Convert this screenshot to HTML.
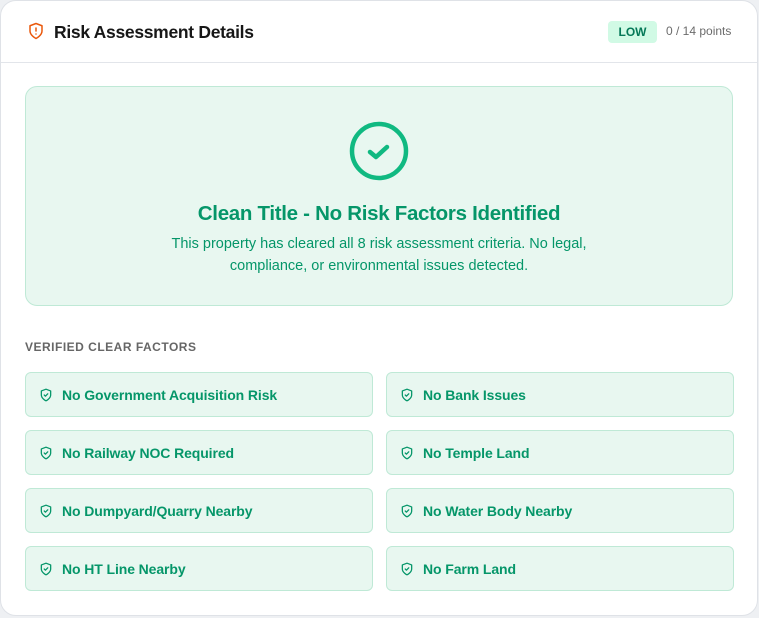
<!DOCTYPE html>
<html><head><style>
*{box-sizing:border-box;margin:0;padding:0}
body{width:759px;height:618px;background:#eef0f3;font-family:"Liberation Sans",sans-serif;overflow:hidden}
.card{position:absolute;left:0;top:0;width:758px;height:616px;background:#fff;border:1px solid #dfe2e7;border-radius:16px;}
.hdr{height:62px;border-bottom:1px solid #e2e5ea;position:relative}
.hdr h2{position:absolute;left:53px;top:21px;font-size:17.5px;font-weight:bold;color:#171717;letter-spacing:-0.3px}
.hdr svg{position:absolute;left:26px;top:21px}
.badge{position:absolute;left:607px;top:20px;width:49px;height:22px;background:#d1fae5;border-radius:4px;color:#047857;font-size:12px;font-weight:bold;text-align:center;line-height:22px}
.pts{position:absolute;left:665px;top:23px;font-size:12px;color:#6b6b6b}
.clean{position:absolute;left:25px;top:86px;width:708px;height:220px;background:#e8f7f0;border:1px solid #bfe9d6;border-radius:12px;text-align:center}
.clean svg{position:absolute;left:322px;top:34px}
.clean h3{position:absolute;left:0;right:0;top:115px;font-size:20.5px;font-weight:bold;color:#059669;letter-spacing:-0.3px}
.clean p{position:absolute;left:0;right:0;top:146px;font-size:14.5px;line-height:22px;color:#059669}
.lbl{position:absolute;left:25px;top:340px;font-size:12px;font-weight:bold;color:#666;letter-spacing:0.5px}
.item{position:absolute;width:348px;height:45px;background:#e8f7f0;border:1px solid #bfe9d6;border-radius:6px;color:#059669;font-size:14px;font-weight:bold;line-height:44px;padding-left:36px;letter-spacing:-0.1px}
.item svg{position:absolute;left:13px;top:15px}
</style></head><body>
<div class="card">
<div class="hdr">
<svg width="18" height="18" viewBox="0 0 24 24" fill="none" stroke="#ea580c" stroke-width="2" stroke-linecap="round" stroke-linejoin="round"><path d="M12 22s8-4 8-10V5l-8-3-8 3v7c0 6 8 10 8 10z"/><path d="M12 8v4M12 16h.01"/></svg>
<h2>Risk Assessment Details</h2>
<div class="badge">LOW</div><div class="pts">0 / 14 points</div>
</div>
</div>
<div class="clean">
<svg width="62" height="62" viewBox="0 0 62 62" fill="none" stroke="#10b981" stroke-width="4.5" stroke-linecap="round" stroke-linejoin="round"><circle cx="31" cy="30" r="27"/><path d="M22 31l6 5 11-10"/></svg>
<h3>Clean Title - No Risk Factors Identified</h3>
<p>This property has cleared all 8 risk assessment criteria. No legal,<br>compliance, or environmental issues detected.</p>
</div>
<div class="lbl">VERIFIED CLEAR FACTORS</div>
<div class="item" style="left:25px;top:372px"><svg width="14" height="14" viewBox="0 0 24 24" fill="none" stroke="#059669" stroke-width="2.2" stroke-linecap="round" stroke-linejoin="round"><path d="M12 22s8-4 8-10V5l-8-3-8 3v7c0 6 8 10 8 10z"/><path d="M9 12l2 2 4-4"/></svg>No Government Acquisition Risk</div>
<div class="item" style="left:386px;top:372px"><svg width="14" height="14" viewBox="0 0 24 24" fill="none" stroke="#059669" stroke-width="2.2" stroke-linecap="round" stroke-linejoin="round"><path d="M12 22s8-4 8-10V5l-8-3-8 3v7c0 6 8 10 8 10z"/><path d="M9 12l2 2 4-4"/></svg>No Bank Issues</div>
<div class="item" style="left:25px;top:430px"><svg width="14" height="14" viewBox="0 0 24 24" fill="none" stroke="#059669" stroke-width="2.2" stroke-linecap="round" stroke-linejoin="round"><path d="M12 22s8-4 8-10V5l-8-3-8 3v7c0 6 8 10 8 10z"/><path d="M9 12l2 2 4-4"/></svg>No Railway NOC Required</div>
<div class="item" style="left:386px;top:430px"><svg width="14" height="14" viewBox="0 0 24 24" fill="none" stroke="#059669" stroke-width="2.2" stroke-linecap="round" stroke-linejoin="round"><path d="M12 22s8-4 8-10V5l-8-3-8 3v7c0 6 8 10 8 10z"/><path d="M9 12l2 2 4-4"/></svg>No Temple Land</div>
<div class="item" style="left:25px;top:488px"><svg width="14" height="14" viewBox="0 0 24 24" fill="none" stroke="#059669" stroke-width="2.2" stroke-linecap="round" stroke-linejoin="round"><path d="M12 22s8-4 8-10V5l-8-3-8 3v7c0 6 8 10 8 10z"/><path d="M9 12l2 2 4-4"/></svg>No Dumpyard/Quarry Nearby</div>
<div class="item" style="left:386px;top:488px"><svg width="14" height="14" viewBox="0 0 24 24" fill="none" stroke="#059669" stroke-width="2.2" stroke-linecap="round" stroke-linejoin="round"><path d="M12 22s8-4 8-10V5l-8-3-8 3v7c0 6 8 10 8 10z"/><path d="M9 12l2 2 4-4"/></svg>No Water Body Nearby</div>
<div class="item" style="left:25px;top:546px"><svg width="14" height="14" viewBox="0 0 24 24" fill="none" stroke="#059669" stroke-width="2.2" stroke-linecap="round" stroke-linejoin="round"><path d="M12 22s8-4 8-10V5l-8-3-8 3v7c0 6 8 10 8 10z"/><path d="M9 12l2 2 4-4"/></svg>No HT Line Nearby</div>
<div class="item" style="left:386px;top:546px"><svg width="14" height="14" viewBox="0 0 24 24" fill="none" stroke="#059669" stroke-width="2.2" stroke-linecap="round" stroke-linejoin="round"><path d="M12 22s8-4 8-10V5l-8-3-8 3v7c0 6 8 10 8 10z"/><path d="M9 12l2 2 4-4"/></svg>No Farm Land</div>
</body></html>
